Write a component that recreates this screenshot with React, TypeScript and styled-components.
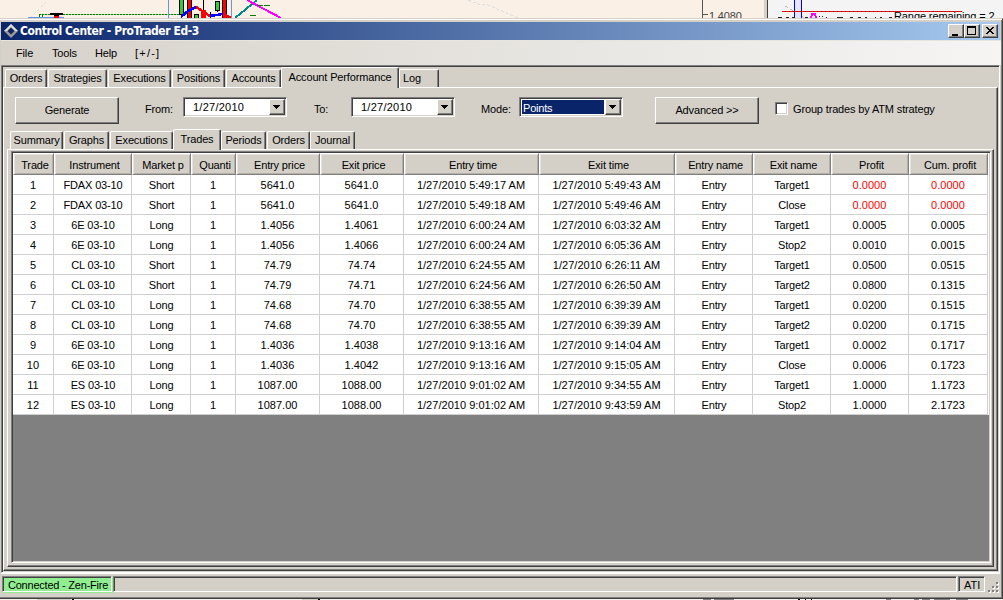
import React from "react";
import styled, { createGlobalStyle, css } from "styled-components";

const face = "#d4d0c8";
const grey = "#808080";
const dark = "#404040";

const GlobalStyle = createGlobalStyle`
  * { box-sizing: border-box; }
  body {
    margin: 0;
    overflow: hidden;
    background: #faf0e6;
    color: #000;
    font: 11px/13px "Liberation Sans", Arial, sans-serif;
    letter-spacing: -0.15px;
  }
`;

const Desktop = styled.div`
  width: 1003px;
  height: 600px;
  display: flex;
  flex-direction: column;
  overflow: hidden;
`;
const Strip = styled.svg`
  display: block;
  flex: none;
`;
const Window = styled.div`
  height: 581px;
  flex: none;
  display: flex;
  flex-direction: column;
  padding: 2px 0 0 1px;
  background: ${face};
  border-top: 1px solid ${face};
  border-right: 1px solid ${dark};
  border-bottom: 1px solid ${dark};
  box-shadow: inset 0 1px #fff, inset -1px -1px ${grey};
`;
const TitleBar = styled.div`
  height: 18px;
  flex: none;
  margin: 1px 2px 0 0;
  display: flex;
  align-items: center;
  padding: 0 2px 0 3px;
  gap: 2px;
  background: linear-gradient(90deg, #0a246a, #a6caf0);
  color: #fff;
`;
const Title = styled.div`
  flex: 1;
  white-space: nowrap;
  font: bold 12px/15px "DejaVu Sans Condensed", "DejaVu Sans", sans-serif;
  font-stretch: condensed;
  letter-spacing: -0.41px;
`;
const raised = css`
  border: 1px solid;
  border-color: #fff ${dark} ${dark} #fff;
  box-shadow: inset -1px -1px ${grey};
  background: ${face};
`;
const sunken = css`
  border: 1px solid;
  border-color: ${grey} #fff #fff ${grey};
  box-shadow: inset 1px 1px ${dark}, inset -1px -1px ${face};
`;
const Caption = styled.div<{ $gap?: number }>`
  ${raised}
  width: 16px;
  height: 14px;
  margin-left: ${(p) => (p.$gap ?? 0) - 2}px;
  svg { display: block; }
`;
const MenuBar = styled.div`
  height: 25px;
  flex: none;
  display: flex;
  align-items: center;
  padding: 0 0 0 15px;
  gap: 19px;
  border-top: 1px solid #e8e5df;
  background: linear-gradient(90deg, #d6d2ca, #f6f5f4);
  margin-right: 1px;
`;
const Text = styled.span<{ $w?: number; $ls?: number }>`
  display: block;
  flex: none;
  white-space: nowrap;
  width: ${(p) => (p.$w ? `${p.$w}px` : "auto")};
  letter-spacing: ${(p) => p.$ls ?? -0.15}px;
`;
const Client = styled.div`
  height: 508px;
  flex: none;
  margin: 0 2px 0 0;
  border: 1px solid;
  border-color: ${grey} #fff #fff ${grey};
  box-shadow: inset 1px 1px ${dark};
  padding: 1px 1px 0 1px;
`;
const Tabs = styled.div<{ $left: number }>`
  height: 20px;
  display: flex;
  align-items: flex-end;
  padding-left: ${(p) => p.$left}px;
`;
const Tab = styled.div<{ $w: number; $on?: boolean; $gap?: number; $start?: boolean }>`
  width: ${(p) => p.$w}px;
  height: ${(p) => (p.$on ? 21 : 18)}px;
  margin-bottom: ${(p) => (p.$on ? -1 : 0)}px;
  margin-left: ${(p) => p.$gap ?? 0}px;
  padding-top: ${(p) => (p.$on ? 3 : 2)}px;
  padding-left: ${(p) => (p.$start ? 3 : 0)}px;
  flex: none;
  display: flex;
  justify-content: ${(p) => (p.$start ? "flex-start" : "center")};
  position: relative;
  background: ${face};
  border: 1px solid #fff;
  border-right-color: ${dark};
  border-bottom: 0;
  border-radius: 2px 2px 0 0;
  box-shadow: inset -1px 0 ${grey};
`;
const Panel = styled.div<{ $h: number; $x?: number }>`
  height: ${(p) => p.$h}px;
  margin: 0 ${(p) => p.$x ?? 0}px;
  border: 1px solid;
  border-color: #fff ${dark} ${dark} #fff;
  box-shadow: inset -1px -1px ${grey};
`;
const Toolbar = styled.div`
  height: 41px;
  display: flex;
  align-items: flex-start;
  padding: 9px 0 0 11px;
`;
const Button = styled.div`
  ${raised}
  width: 104px;
  height: 27px;
  flex: none;
  display: flex;
  justify-content: center;
  padding-top: 6px;
`;
const Field = styled.div<{ $l: number; $w: number }>`
  width: ${(p) => p.$w}px;
  margin-left: ${(p) => p.$l}px;
  padding-top: 6px;
  flex: none;
  white-space: nowrap;
`;
const Combo = styled.div`
  ${sunken}
  width: 104px;
  height: 20px;
  flex: none;
  display: flex;
  padding: 1px;
  background: #fff;
`;
const Value = styled.div<{ $sel?: boolean }>`
  flex: 1;
  height: 16px;
  padding: 2px 0 0 8px;
  white-space: nowrap;
  letter-spacing: 0.25px;
  ${(p) =>
    p.$sel &&
    css`
      padding: 2px 0 0 1px;
      background: #0a246a;
      color: #fff;
      border: 1px solid #fff;
      line-height: 12px;
      letter-spacing: -0.2px;
    `}
`;
const Arrow = styled.div`
  ${raised}
  width: 16px;
  height: 16px;
  svg { display: block; }
`;
const Check = styled.div`
  ${sunken}
  width: 13px;
  height: 13px;
  margin: 5px 5px 0 16px;
  flex: none;
  background: #fff;
`;
const GridFrame = styled.div`
  height: 412px;
  margin: 1px 2px 0 3px;
  border: 1px solid;
  border-color: ${grey} #fff #fff ${grey};
  box-shadow: inset 1px 1px ${dark}, inset -1px -1px ${face};
  padding: 1px;
`;
const GridBody = styled.div`
  height: 408px;
  background: ${grey};
`;
const Row = styled.div`
  display: grid;
  grid-template-columns: 41px 78px 59px 45px 84px 84px 135px 136px 78px 78px 78px 79px;
  height: 20px;
  background: #fff;
`;
const HeadRow = styled(Row)`
  height: 22px;
`;
const Head = styled.div`
  padding: 5px 0 0 3px;
  overflow: hidden;
  white-space: nowrap;
  text-align: center;
  background: ${face};
  border: 1px solid;
  border-color: #fff ${grey} ${grey} #fff;
  box-shadow: inset 1px 1px #e6e3de, inset -1px -1px #b4b0a8;
`;
const Cell = styled.div<{ $red?: boolean; $num?: boolean }>`
  padding: 4px 0 0 ${(p) => (p.$num ? 0 : 1)}px;
  white-space: nowrap;
  text-align: center;
  letter-spacing: ${(p) => (p.$num ? 0.03 : -0.15)}px;
  border-right: 1px solid #d0d0d0;
  border-bottom: 1px solid #d0d0d0;
  color: ${(p) => (p.$red ? "#f00" : "#000")};
`;
const Status = styled.div`
  height: 24px;
  margin: 0 2px 0 0;
  border-top: 1px solid #fff;
  padding: 2px 0 0 1px;
  display: flex;
`;
const StatusCell = styled.div<{ $w: number; $green?: boolean }>`
  width: ${(p) => p.$w}px;
  height: 16px;
  margin-right: 1px;
  padding: 2px 0 0 5px;
  flex: none;
  white-space: nowrap;
  letter-spacing: ${(p) => (p.$green ? -0.22 : 0)}px;
  border: 1px solid;
  border-color: ${grey} #fff #fff ${grey};
  box-shadow: inset 1px 1px ${dark}${(p) => (p.$green ? ", 1px 1px #90ee90" : "")};
  background: ${(p) => (p.$green ? "#90ee90" : face)};
`;

const Triangle = () => (
  <svg width="14" height="14" shapeRendering="crispEdges"><path d="M3 5h7v1H9v1H8v1H7v1H6V8H5V7H4V6H3z" /></svg>
);

type TabDef = [string, number, number?];
const mainTabs: TabDef[] = [["Orders", 42], ["Strategies", 59, 1], ["Executions", 63, 1], ["Positions", 53, 1], ["Accounts", 55, 1], ["Account Performance", 118], ["Log", 40]];
const subTabs: TabDef[] = [["Summary", 53], ["Graphs", 45, 1], ["Executions", 63, 1], ["Trades", 48], ["Periods", 45], ["Orders", 43, 1], ["Journal", 45]];
const heads = ["Trade", "Instrument", "Market p", "Quanti", "Entry price", "Exit price", "Entry time", "Exit time", "Entry name", "Exit name", "Profit", "Cum. profit"];
const textColumns = [1, 2, 8, 9];
const rows = [
  "FDAX 03-10|Short|5641.0|5641.0|5:49:17|5:49:43|Target1|0.0000|0.0000",
  "FDAX 03-10|Short|5641.0|5641.0|5:49:18|5:49:46|Close|0.0000|0.0000",
  "6E 03-10|Long|1.4056|1.4061|6:00:24|6:03:32|Target1|0.0005|0.0005",
  "6E 03-10|Long|1.4056|1.4066|6:00:24|6:05:36|Stop2|0.0010|0.0015",
  "CL 03-10|Short|74.79|74.74|6:24:55|6:26:11|Target1|0.0500|0.0515",
  "CL 03-10|Short|74.79|74.71|6:24:56|6:26:50|Target2|0.0800|0.1315",
  "CL 03-10|Long|74.68|74.70|6:38:55|6:39:39|Target1|0.0200|0.1515",
  "CL 03-10|Long|74.68|74.70|6:38:55|6:39:39|Target2|0.0200|0.1715",
  "6E 03-10|Long|1.4036|1.4038|9:13:16|9:14:04|Target1|0.0002|0.1717",
  "6E 03-10|Long|1.4036|1.4042|9:13:16|9:15:05|Close|0.0006|0.1723",
  "ES 03-10|Long|1087.00|1088.00|9:01:02|9:34:55|Target1|1.0000|1.1723",
  "ES 03-10|Long|1087.00|1088.00|9:01:02|9:43:59|Stop2|1.0000|2.1723",
].map((r, i) => {
  const [ins, side, ep, xp, et, xt, xn, p, c] = r.split("|");
  return [String(i + 1), ins, side, "1", ep, xp, `1/27/2010 ${et} AM`, `1/27/2010 ${xt} AM`, "Entry", xn, p, c];
});

const TabRow = ({ items, on, left }: { items: TabDef[]; on: string; left: number }) => (
  <Tabs $left={left}>
    {items.map(([name, w, gap]) => (
      <Tab key={name} $w={w} $gap={gap} $on={name === on} $start={name === "Log"}><Text>{name}</Text></Tab>
    ))}
  </Tabs>
);

const ChartStrip = () => (
  <Strip width="1003" height="18" viewBox="0 0 1003 18" shapeRendering="crispEdges">
    <rect width="1003" height="18" fill="#faf0e6" />
    <path d="M30 18L48 0M468 0l10 4 10 1 30 13" stroke="#ddd" strokeDasharray="3 2" fill="none" />
    <path d="M39 14.5H180" stroke="#8fc98a" />
    <path d="M39 14.5H180" stroke="#008000" strokeDasharray="2 1" />
    <path d="M39.5 14v4M42.5 15v3" stroke="#008000" />
    <path d="M28 17.5h36" stroke="#6495ed" />
    <path d="M50 13h13v2h-4v2h-5v-2h-4z" />
    <path d="M54 16h5v2h-5z" fill="#f00" />
    <path d="M168.500 0v18M231.500 0v18" stroke="#6495ed" />
    <path d="M179.500 0v14h4V0M215.500 1v9h4V1zM194.500 14v4h4v-4zM217.500 10v2" fill="#32cd32" stroke="#000" />
    <path d="M187 0h5v18h-5zM222 0h4v18h-4z" fill="#f00" />
    <path d="M187.500 0v18M191.500 0v18M203.500 0v18M210.500 12v6M222.500 0v18M226.500 0v18" stroke="#000" />
    <path d="M201 10h5v8h-5z" fill="#f00" />
    <g fill="none" strokeWidth="2.500">
      <path d="M181 17l7-6 8-4M210 16l13-2" stroke="#00f" />
      <path d="M196 7l14 9M223 14l8 4" stroke="#f00" />
      <path d="M235 18l22-18" stroke="#008b8b" strokeWidth="2" />
      <path d="M247 0l34 18" stroke="#f0f" strokeWidth="2" />
    </g>
    <path d="M258 5.500h5M264 5.500h6M250 15.500h6" stroke="#008000" />
    <path d="M702.500 0v18M703 14.500h5" stroke="#555" />
    <text x="709" y="20" fontSize="11" fill="#444">1.4080</text>
    <path d="M764 0h4v18h-4z" fill={face} />
    <path d="M767.500 0v18" stroke={dark} />
    <path d="M768 0h235v18h-235z" fill="#f4f4f4" />
    <path d="M785 6l20 12" stroke="#bbb" strokeDasharray="4 2" />
    <path d="M794 0h7v18h-7z" fill="#e6e6fa" />
    <path d="M794.500 0v18M801.500 0v18" stroke="#00f" />
    <path d="M782 11.500h180" stroke="#600" />
    <path d="M782 11.500h180" stroke="#f00" strokeDasharray="3 1" />
    <path d="M778 17.500h4M786 17.500h3M792 17.500h3M805 17.500h3M819 16.500h1M822 16.500h1M826 17.500h1M837 17.500h6M850 17.500h3M858 17.500h3M865 17.500h2M875 17.500h1M880 17.500h2M889 17.500h3" stroke="#222" />
    <path d="M811 18l1-4h3l1 4" stroke="#f0f" strokeWidth="2" fill="none" />
    <text x="894" y="20" fontSize="11" letterSpacing="-0.100">Range remaining = 2</text>
  </Strip>
);

export default function App() {
  return (
    <Desktop>
      <GlobalStyle />
      <ChartStrip />
      <Window>
        <TitleBar>
          <svg width="14" height="14" viewBox="0 0 14 14">
            <path d="M7 0l7 7-7 7-7-7z" fill="#999" />
            <path d="M7 0l7 7H11L7 3 3 7H0z" fill="#ddd" />
            <path d="M7 3.500L10.500 7 7 10.500 3.500 7z" fill="#10245c" />
          </svg>
          <Title>Control Center - ProTrader Ed-3</Title>
          <Caption><svg width="14" height="12" shapeRendering="crispEdges"><path d="M3 9h6v2H3z" /></svg></Caption>
          <Caption><svg width="14" height="12" shapeRendering="crispEdges"><path d="M2 1h9v9H2zM3 3v6h7V3z" fillRule="evenodd" /></svg></Caption>
          <Caption $gap={2}><svg width="14" height="12" shapeRendering="crispEdges"><path d="M3 2h2v1h1v1h2V3h1V2h2v1h-1v1H9v1H8v1h1v1h1v1h1v1H9V8H8V7H6v1H5v1H3V8h1V7h1V6h1V5H5V4H4V3H3z" /></svg></Caption>
        </TitleBar>
        <MenuBar>
          <Text $w={17}>File</Text><Text $w={24}>Tools</Text><Text $w={21}>Help</Text><Text $ls={1.2}>[+/-]</Text>
        </MenuBar>
        <Client>
          <TabRow items={mainTabs} on="Account Performance" left={2} />
          <Panel $h={484}>
            <Toolbar>
              <Button><Text>Generate</Text></Button>
              <Field $l={26} $w={38}>From:</Field>
              <Combo><Value>1/27/2010</Value><Arrow><Triangle /></Arrow></Combo>
              <Field $l={27} $w={37}>To:</Field>
              <Combo><Value>1/27/2010</Value><Arrow><Triangle /></Arrow></Combo>
              <Field $l={26} $w={38}>Mode:</Field>
              <Combo><Value $sel>Points</Value><Arrow><Triangle /></Arrow></Combo>
              <Field $l={32} $w={0} />
              <Button><Text>Advanced &gt;&gt;</Text></Button>
              <Check />
              <Field $l={0} $w={150}>Group trades by ATM strategy</Field>
            </Toolbar>
            <TabRow items={subTabs} on="Trades" left={6} />
            <Panel $h={418} $x={3}>
              <GridFrame>
                <GridBody>
                  <HeadRow>{heads.map((h) => <Head key={h}>{h}</Head>)}</HeadRow>
                  {rows.map((r) => (
                    <Row key={r[0]}>
                      {r.map((c, i) => (
                        <Cell key={i} $num={!textColumns.includes(i)} $red={i > 9 && c === "0.0000"}>{c}</Cell>
                      ))}
                    </Row>
                  ))}
                </GridBody>
              </GridFrame>
            </Panel>
          </Panel>
        </Client>
        <Status>
          <StatusCell $w={110} $green>Connected - Zen-Fire</StatusCell>
          <StatusCell $w={844}></StatusCell>
          <StatusCell $w={27}>ATI</StatusCell>
          <svg width="14" height="18" viewBox="0 1 14 18" shapeRendering="crispEdges">
            <path d="M11 8h2v2h-2zM7 12h2v2H7zM11 12h2v2h-2zM3 16h2v2H3zM7 16h2v2H7zM11 16h2v2h-2z" fill="#fff" />
            <path d="M10 7h2v2h-2zM6 11h2v2H6zM10 11h2v2h-2zM2 15h2v2H2zM6 15h2v2H6zM10 15h2v2h-2z" fill={grey} />
          </svg>
        </Status>
      </Window>
      <Strip width="1003" height="1" shapeRendering="crispEdges">
        <path d="M0 0h1003v1H0z" fill="#f6f1ec" />
        <path d="M37 0h34v1H37zM302 0h16v1h-16z" fill={face} />
        <path d="M72 0h2v1h-2zM318 0h2v1h-2zM798 0h2v1h-2zM805 0h1v1h-1zM811 0h1v1h-1z" />
        <path d="M703 0h8v1h-8zM714 0h20v1h-20zM886 0h5v1h-5zM914 0h5v1h-5zM922 0h8v1h-8zM934 0h16v1h-16zM956 0h12v1h-12z" fill={grey} />
      </Strip>
    </Desktop>
  );
}
